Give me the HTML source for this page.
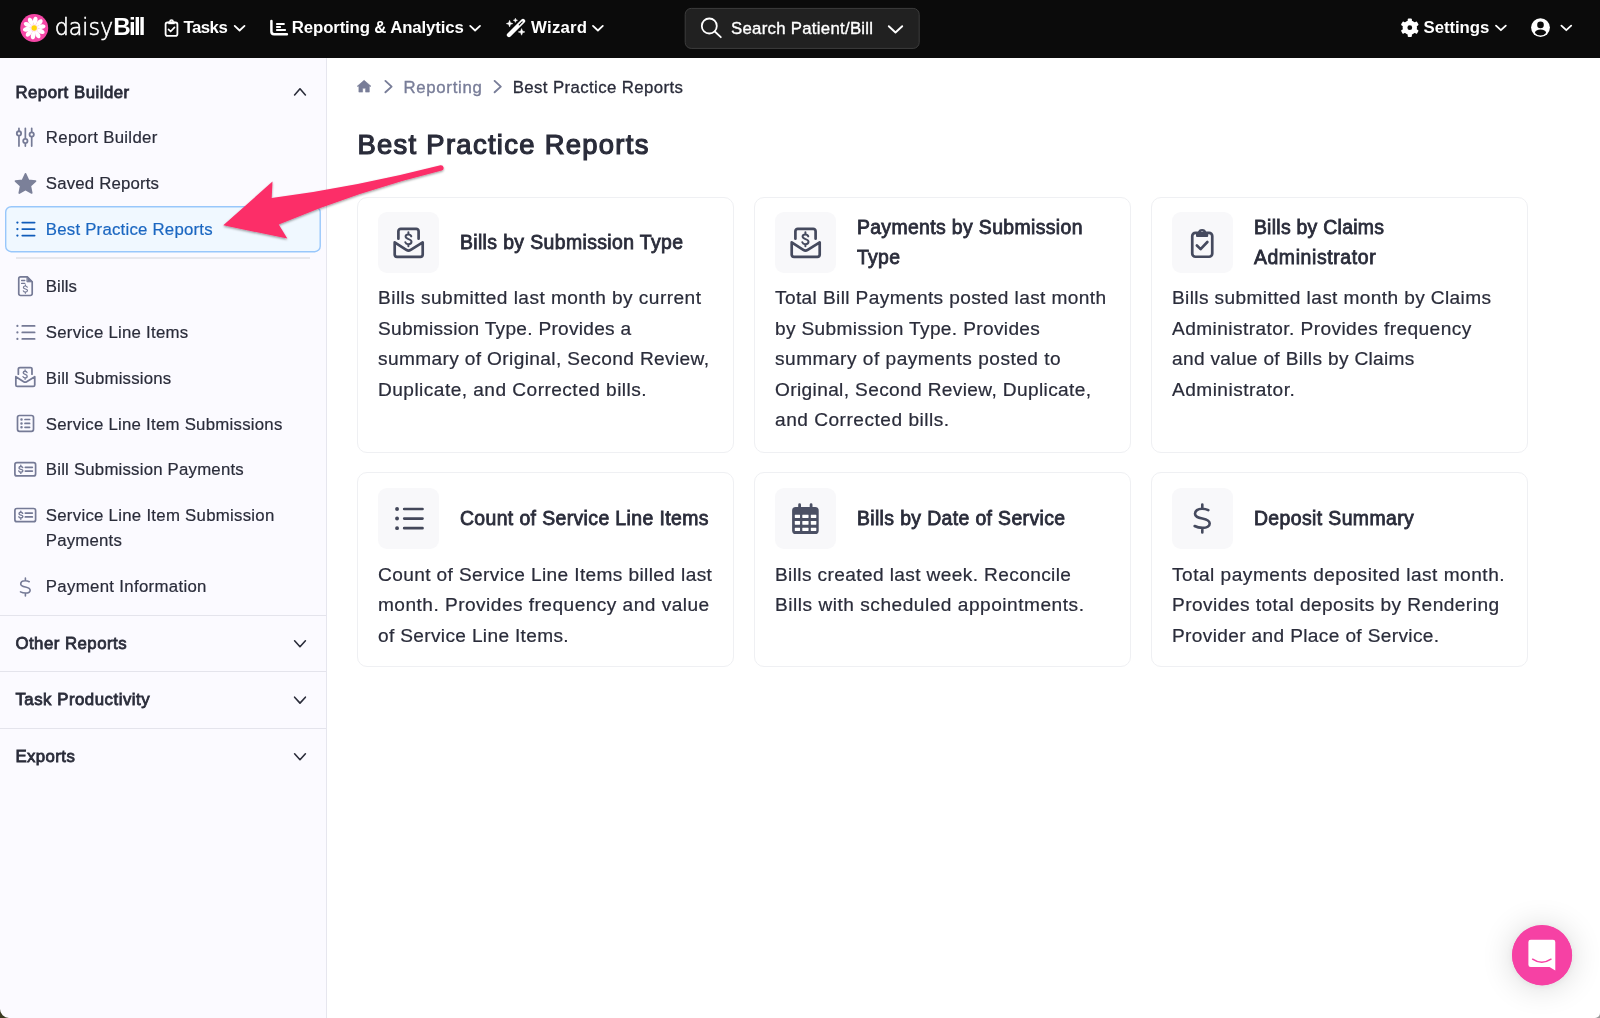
<!DOCTYPE html>
<html lang="en">
<head>
<meta charset="utf-8">
<title>Best Practice Reports - daisyBill</title>
<style>
*{box-sizing:border-box;margin:0;padding:0}
html,body{width:1600px;height:1018px;overflow:hidden;background:#fff;font-family:"Liberation Sans",sans-serif}
.abs{position:absolute}
#txt{position:absolute;left:0;top:0;width:1600px;height:1018px;will-change:transform}
.t{position:absolute;white-space:nowrap;display:block}
#nav{position:absolute;left:0;top:0;width:1600px;height:58px;background:#0b0b0b}
#side{position:absolute;left:0;top:58px;width:327px;height:960px;background:#fbfaff;border-right:1px solid #e6e6ee}
.hr{position:absolute;left:0;width:326px;height:1px;background:#e4e4ec}
.card{position:absolute;width:377px;border:1px solid #eff0f3;border-radius:10px;background:#fff}
.ib{position:absolute;width:61px;height:61px;border-radius:9px;background:#f8f8fa}
svg{position:absolute;overflow:visible}
.si{stroke:#757a96;fill:none;stroke-width:1.7;stroke-linecap:round;stroke-linejoin:round}
.wi{stroke:#fff;fill:none;stroke-width:1.8;stroke-linecap:round;stroke-linejoin:round}
</style>
</head>
<body>
<div id="nav"></div>
<div id="side"></div>
<div class="hr" style="left:16px;width:294px;top:257px;height:2px;background:#e7e7ec"></div>
<div class="hr" style="top:615px"></div>
<div class="hr" style="top:671px"></div>
<div class="hr" style="top:728px"></div>

<div class="card" style="left:357px;top:196.5px;height:256px"></div>
<div class="card" style="left:754px;top:196.5px;height:256px"></div>
<div class="card" style="left:1151px;top:196.5px;height:256px"></div>
<div class="card" style="left:357px;top:472px;height:195px"></div>
<div class="card" style="left:754px;top:472px;height:195px"></div>
<div class="card" style="left:1151px;top:472px;height:195px"></div>
<div class="ib" style="left:378px;top:212px"></div>
<div class="ib" style="left:775px;top:212px"></div>
<div class="ib" style="left:1172px;top:212px"></div>
<div class="ib" style="left:378px;top:488px"></div>
<div class="ib" style="left:775px;top:488px"></div>
<div class="ib" style="left:1172px;top:488px"></div>

<div class="abs" style="left:1512px;top:925.4px;width:60px;height:60px;border-radius:50%;background:#f641a4;box-shadow:0 1px 6px 0 rgba(0,0,0,.06),0 2px 32px 0 rgba(0,0,0,.16)"></div>
<svg class="abs" style="left:0;top:0" width="1600" height="1018" viewBox="0 0 1600 1018">
<defs>
<filter id="ash" x="-10%" y="-20%" width="120%" height="150%"><feDropShadow dx="0" dy="1.200" stdDeviation="0.900" flood-color="#000" flood-opacity="0.400"/></filter>
<filter id="ish" x="-60%" y="-60%" width="220%" height="220%"><feDropShadow dx="0" dy="2" stdDeviation="9" flood-color="#000" flood-opacity="0.16"/></filter>
<path id="pet" d="M0 -2.2 C-2.6 -5 -2.9 -9.3 -1.2 -10.9 C-0.5 -11.6 0.5 -11.6 1.2 -10.9 C2.9 -9.3 2.6 -5 0 -2.2Z"/>

<g id="envd" fill="none" stroke-linecap="round" stroke-linejoin="round">
<path d="M5.400 11.700V4.200a2.400 2.400 0 0 1 2.400-2.400H23.200a2.400 2.400 0 0 1 2.400 2.400V11.700"/>
<path d="M1.700 27.600V15.400L13.300 22.900Q15.500 24.300 17.700 22.900L29.700 15.400V27.600a2.300 2.300 0 0 1-2.300 2.300H4a2.300 2.300 0 0 1-2.300-2.300z"/>
<path d="M18.300 9.400C17.900 8.100 16.900 7.400 15.400 7.400C13.700 7.400 12.600 8.300 12.600 9.600C12.600 12.800 18.500 11.400 18.500 14.800C18.500 16.200 17.300 17.200 15.400 17.200C13.800 17.200 12.700 16.500 12.300 15.300M15.400 5.300V7.400M15.400 17.200V19.300" stroke-width="2"/>
</g>
<g id="clipd" stroke-linecap="round" stroke-linejoin="round">
<rect x="2.250" y="5.850" width="20" height="23.900" rx="3.200" fill="none"/>
<path d="M7 10a1 1 0 0 1-1-1V6.400a1 1 0 0 1 1-1h.8a4.400 4.400 0 0 1 8.600 0h.8a1 1 0 0 1 1 1V9a1 1 0 0 1-1 1z M12.100 4.050a1.350 1.350 0 1 0 0 2.700a1.350 1.350 0 1 0 0-2.700z" fill-rule="evenodd" stroke="none" class="f"/>
<path d="M6.900 18.550L10.600 22.100L17.350 15" fill="none"/>
</g>
<g id="dold" fill="none" stroke-linecap="round" stroke-linejoin="round">
<path d="M6 -8.100C4.200 -9.100 2.200 -9.600 -.3 -9.600C-4.500 -9.600 -7.300 -7.600 -7.300 -4.500C-7.300 -1.500 -4.800 -.7 0 .2C4.700 1.200 7.400 2.200 7.400 5.200C7.400 8 4.700 9.600 .3 9.600C-2.800 9.600 -5.500 8.900 -7.700 7.700M0 -13.700V-9.600M0 9.600V14.100"/>
</g>
</defs>
<rect x="685.2" y="8.400" width="234" height="40" rx="6" fill="#212121" stroke="#3d3d3d" stroke-width="1"/>
<rect x="5.700" y="206.700" width="314.500" height="45" rx="5.500" fill="#f0f8ff" stroke="#98c7fb" stroke-width="1.400"/>
<!-- logo -->
<circle cx="34.2" cy="28.1" r="14" fill="#f547a6"/>
<g transform="translate(34.2 28)" fill="#ffffff">
<use href="#pet" transform="rotate(8)"/><use href="#pet" transform="rotate(44)"/><use href="#pet" transform="rotate(80)"/><use href="#pet" transform="rotate(116)"/><use href="#pet" transform="rotate(152)"/><use href="#pet" transform="rotate(188)"/><use href="#pet" transform="rotate(224)"/><use href="#pet" transform="rotate(260)"/><use href="#pet" transform="rotate(296)"/><use href="#pet" transform="rotate(332)"/>
<circle r="4" fill="#ffe9f4"/><circle r="2.7" fill="#ffd60a"/>
</g>
<!-- nav: tasks clipboard -->
<g stroke="#fff" fill="none" stroke-linecap="round" stroke-linejoin="round">
<rect x="165.600" y="22.500" width="11.800" height="13.300" rx="1.900" stroke-width="1.800"/>
<path d="M168.300 22.900h6.400" stroke-width="2.600" stroke-linecap="butt"/>
<path d="M169.900 21.600a1.600 1.600 0 0 1 3.200 0" stroke-width="1.500"/>
<path d="M168.500 29.400l2.100 2.100 3.900-4.100" stroke-width="1.700"/>
</g>
<!-- nav chevrons -->
<g class="wi" stroke-width="1.8">
<path d="M234.7 25.9l4.9 4.6 4.9-4.6"/>
<path d="M470.2 25.9l4.9 4.6 4.9-4.6"/>
<path d="M593 25.9l4.9 4.6 4.9-4.6"/>
<path d="M1496 25.6l4.9 4.6 4.9-4.6"/>
<path d="M1561.4 25.6l4.9 4.6 4.9-4.6"/>
<path d="M888.8 26.2l6.7 6.3 6.7-6.3" stroke-width="1.9"/>
</g>
<!-- nav: chart -->
<g class="wi">
<path d="M271.400 21v10.600a2.700 2.700 0 0 0 2.700 2.700h12.800" stroke-width="2.500"/>
<path d="M276.900 24h7M276.900 27h3.200M276.900 30h8.200" stroke-width="2"/>
</g>
<!-- nav: wand -->
<g>
<path d="M509 35l14-14" stroke="#fff" stroke-width="4.4" stroke-linecap="round"/>
<path d="M519.2 24.8l3-3" stroke="#0b0b0b" stroke-width="1.1" stroke-linecap="round"/>
<path d="M509.6 20.3l.9 2.4 2.4.9-2.4.9-.9 2.4-.9-2.4-2.4-.9 2.4-.9z M515.4 18.2l.6 1.5 1.5.6-1.500.6-.6 1.5-.6-1.5-1.5-.6 1.5-.6z M521.6 28.600l.9 2.400 2.400.9-2.400.9-.9 2.400-.9-2.400-2.400-.9 2.400-.9z" fill="#fff" stroke="#fff" stroke-width=".5" stroke-linejoin="round"/>
</g>
<!-- search box -->
<g class="wi" stroke-width="1.9"><circle cx="709.3" cy="26" r="7.500"/><path d="M714.800 31.500l6 5.700"/></g>
<!-- gear -->
<g transform="translate(1409.800 27.700)">
<circle r="4.800" fill="none" stroke="#fff" stroke-width="4.800"/>
<g fill="#fff"><rect x="-2.100" y="-9.200" width="4.200" height="4" rx="1"/><rect x="-2.100" y="-9.200" width="4.200" height="4" rx="1" transform="rotate(60)"/><rect x="-2.100" y="-9.200" width="4.200" height="4" rx="1" transform="rotate(120)"/><rect x="-2.100" y="-9.200" width="4.200" height="4" rx="1" transform="rotate(180)"/><rect x="-2.100" y="-9.200" width="4.200" height="4" rx="1" transform="rotate(240)"/><rect x="-2.100" y="-9.200" width="4.200" height="4" rx="1" transform="rotate(300)"/></g>
</g>
<!-- user -->
<g transform="translate(1540.500 27.600)">
<circle r="9.400" fill="#fff"/><circle cy="-2.700" r="3.300" fill="#0b0b0b"/>
<path d="M-5.600 5.300a5.600 3.400 0 0 1 11.200 0a7.500 7.500 0 0 1-11.200 0z" fill="#0b0b0b"/>
</g>
<!-- sidebar chevrons -->
<g fill="none" stroke="#2a2c3a" stroke-width="1.600" stroke-linecap="round" stroke-linejoin="round">
<path d="M294.600 95l5.400-6.200 5.400 6.200"/>
<path d="M294.600 640.800l5.400 5.900 5.400-5.900"/>
<path d="M294.600 697.200l5.400 5.900 5.400-5.900"/>
<path d="M294.600 753.800l5.400 5.900 5.400-5.900"/>
</g>
<!-- sidebar: sliders -->
<g class="si" stroke-width="1.900">
<path d="M18.960 128.300v2.200M18.960 136.400v9.700M25.350 128.300v9.800M25.350 144v2.100M31.700 128.300v3.400M31.700 137.600v8.500"/>
<circle cx="18.960" cy="133.400" r="2.150" stroke-width="1.800"/><circle cx="25.350" cy="141" r="2.150" stroke-width="1.800"/><circle cx="31.700" cy="134.600" r="2.150" stroke-width="1.800"/>
</g>
<!-- star -->
<path d="M25.500 173.800l3 6.500 7 .8-5.200 4.900 1.400 7-6.200-3.500-6.200 3.500 1.400-7-5.200-4.900 7-.8z" fill="#7b8099" stroke="#7b8099" stroke-width="1.700" stroke-linejoin="round"/>
<!-- list active -->
<g fill="none" stroke="#105cba" stroke-width="1.800" stroke-linecap="round">
<path d="M22.300 222.600h12.300M22.300 229.100h12.300M22.300 235.600h12.300"/>
<path d="M17.400 222.600h.01M17.400 229.100h.01M17.400 235.600h.01" stroke-width="2.300"/>
</g>
<!-- file invoice -->
<g class="si" stroke-width="1.800">
<path d="M20.550 276.900H27.300L32.200 281.800V293.700a1.800 1.800 0 0 1-1.800 1.800H20.550a1.800 1.800 0 0 1-1.800-1.800V278.700a1.800 1.800 0 0 1 1.800-1.800z"/>
<path d="M27.300 276.900L32.200 281.800H27.300z" fill="#757a96" stroke-width="1"/>
<path d="M21.600 280.500h3.200M21.600 283.400h3.200" stroke-width="1.300"/>
<path d="M27.300 287.200c-.3-.8-1-1.200-2-1.200-1.100 0-1.900.6-1.900 1.500 0 2.100 4.100.9 4.100 3.100 0 .9-.8 1.500-2.100 1.500-1 0-1.800-.4-2.100-1.200M25.400 284.900v1.100M25.400 292.100v1.100" stroke-width="1.200"/>
</g>
<!-- list gray -->
<g fill="none" stroke="#757a96" stroke-width="1.800" stroke-linecap="round">
<path d="M22.300 325.900h12.300M22.300 332.400h12.300M22.300 338.900h12.300"/>
<path d="M17.400 325.900h.01M17.400 332.400h.01M17.400 338.900h.01" stroke-width="2.200"/>
</g>
<!-- envelope open dollar (sidebar) -->
<use href="#envd" transform="translate(14.700 366.300) scale(0.675)" stroke="#757a96" stroke-width="2.600"/>
<!-- list alt -->
<g class="si">
<rect x="17.500" y="415.500" width="16" height="15.800" rx="2"/>
<path d="M25 419.500h4.600M25 423.400h4.600M25 427.300h4.600" stroke-width="1.700"/>
<path d="M21.500 419.500h.01M21.500 423.400h.01M21.500 427.300h.01" stroke-width="2.500"/>
</g>
<!-- money check 1 & 2 -->
<g class="si" id="mc1">
<rect x="14.900" y="462.700" width="20.700" height="13.200" rx="2"/>
<path d="M25.400 467.300h6.900M25.400 471.100h6.900" stroke-width="1.800"/>
<path d="M22.700 467.600c-.3-.8-1-1.100-1.900-1.100-1.100 0-1.800.6-1.800 1.400 0 2 3.900.9 3.900 2.900 0 .9-.8 1.400-2 1.400-1 0-1.800-.4-2.100-1.200M20.800 465.300v1.200M20.800 472.200v1.200" stroke-width="1.400"/>
</g>
<g class="si" transform="translate(0 45.800)">
<rect x="14.900" y="462.700" width="20.700" height="13.200" rx="2"/>
<path d="M25.400 467.300h6.900M25.400 471.100h6.900" stroke-width="1.800"/>
<path d="M22.700 467.600c-.3-.8-1-1.100-1.900-1.100-1.100 0-1.800.6-1.800 1.400 0 2 3.900.9 3.900 2.900 0 .9-.8 1.400-2 1.400-1 0-1.800-.4-2.100-1.200M20.800 465.300v1.200M20.800 472.200v1.200" stroke-width="1.400"/>
</g>
<!-- dollar sidebar -->
<use href="#dold" transform="translate(25.400 586.900) scale(0.640)" stroke="#757a96" stroke-width="2.500"/>
<!-- breadcrumb -->
<path d="M364.100 80.300l-6.900 6h1.700v5.800h3.700v-3.900h3v3.900h3.700v-5.800h1.700z" fill="#787d98" stroke="#787d98" stroke-width=".6" stroke-linejoin="round"/>
<g fill="none" stroke="#787d98" stroke-width="1.900" stroke-linecap="round" stroke-linejoin="round">
<path d="M385.400 80.900l6.200 5.700-6.200 5.700"/><path d="M494.600 80.900l6.200 5.700-6.200 5.700"/>
</g>
<!-- card icons -->
<use href="#envd" transform="translate(393 227)" stroke="#454a5e" stroke-width="2.700"/>
<use href="#envd" transform="translate(790 227)" stroke="#454a5e" stroke-width="2.700"/>
<use href="#clipd" transform="translate(1190 227)" stroke="#454a5e" fill="#454a5e" stroke-width="2.700"/>
<!-- card list -->
<g fill="none" stroke="#434759" stroke-width="2.700" stroke-linecap="round">
<path d="M404.200 509h18.300M404.200 518.550h18.300M404.200 528.150h18.300"/>
<path d="M397.050 509h.01M397.050 518.550h.01M397.050 528.150h.01" stroke-width="3.900"/>
</g>
<!-- card calendar -->
<g>
<path d="M799.600 504.700v4M811.100 504.700v4" stroke="#4b5064" stroke-width="2.800" stroke-linecap="round"/>
<rect x="792.100" y="507.050" width="26.600" height="26.950" rx="3.600" fill="#4b5064"/>
<g fill="#ffffff"><rect x="794.800" y="514.700" width="5.250" height="3.300" rx=".4"/><rect x="802.300" y="514.700" width="6.250" height="3.300" rx=".4"/><rect x="810.800" y="514.700" width="5.500" height="3.300" rx=".4"/><rect x="794.800" y="521.100" width="5.250" height="3.600" rx=".4"/><rect x="802.300" y="521.100" width="6.250" height="3.600" rx=".4"/><rect x="810.800" y="521.100" width="5.500" height="3.600" rx=".4"/><rect x="794.800" y="527.700" width="5.250" height="3.300" rx=".4"/><rect x="802.300" y="527.700" width="6.250" height="3.300" rx=".4"/><rect x="810.800" y="527.700" width="5.500" height="3.300" rx=".4"/></g>
</g>
<!-- card dollar -->
<use href="#dold" transform="translate(1202.300 518.300)" stroke="#454a5e" stroke-width="2.600"/>
<!-- arrow -->
<path d="M223.300 225.300L272.500 181.600L271.700 198Q356 187 440.500 165.200A2.800 2.800 0 0 1 441.800 170.600Q360 190.500 278.750 224.500L287.300 238.600Z" fill="#fc2d68" filter="url(#ash)"/>
<!-- intercom -->
<circle cx="1542.100" cy="955.400" r="30" fill="#f641a4"/>
<path d="M1530.700 939.800h22.300a2.300 2.300 0 0 1 2.300 2.300v28.300l-5.800-3.300h-18.800a2.300 2.300 0 0 1-2.300-2.300v-22.700a2.300 2.300 0 0 1 2.300-2.300z" fill="#fff"/>
<path d="M1532.600 959.200q9.100 6.200 18.400 0" fill="none" stroke="#f641a4" stroke-width="1.500" stroke-linecap="round"/>
<!-- window corners -->
<path d="M0 1018v-9a9 9 0 0 0 9 9z" fill="#3a3a20"/>
<path d="M1600 1018v-5a5 5 0 0 1-5 5z" fill="#999"/>
</svg>

<div id="txt">
<span id="t0" class="t" style="left:54.70px;top:12.77px;font-size:22.3px;line-height:29px;font-weight:200;color:#ffffff;letter-spacing:-0.100px;font-family:'DejaVu Sans Light','DejaVu Sans',sans-serif;-webkit-text-stroke:0.55px #fff;">daisy</span>
<span id="t1" class="t" style="left:113.20px;top:11.11px;font-size:24.2px;line-height:31px;font-weight:700;color:#ffffff;letter-spacing:-1.750px;">Bill</span>
<span id="t2" class="t" style="left:183.57px;top:16.58px;font-size:16.8px;line-height:22px;font-weight:700;color:#ffffff;letter-spacing:-0.540px;">Tasks</span>
<span id="t3" class="t" style="left:291.87px;top:16.58px;font-size:16.8px;line-height:22px;font-weight:700;color:#ffffff;letter-spacing:-0.139px;">Reporting &amp; Analytics</span>
<span id="t4" class="t" style="left:531.08px;top:16.58px;font-size:16.8px;line-height:22px;font-weight:700;color:#ffffff;letter-spacing:0.231px;">Wizard</span>
<span id="t5" class="t" style="left:730.94px;top:18.28px;font-size:16.8px;line-height:22px;font-weight:400;color:#ffffff;letter-spacing:0.280px;-webkit-text-stroke:0.35px #fff;">Search Patient/Bill</span>
<span id="t6" class="t" style="left:1423.62px;top:17.38px;font-size:16.8px;line-height:22px;font-weight:700;color:#ffffff;letter-spacing:-0.080px;">Settings</span>
<span id="t7" class="t" style="left:15.40px;top:82.18px;font-size:16.8px;line-height:22px;font-weight:400;color:#2a2c3a;letter-spacing:0.504px;-webkit-text-stroke:0.8px #2a2c3a;">Report Builder</span>
<span id="t8" class="t" style="left:45.80px;top:127.18px;font-size:16.8px;line-height:22px;font-weight:400;color:#2a2c3a;letter-spacing:0.329px;-webkit-text-stroke:0.2px #2a2c3a;">Report Builder</span>
<span id="t9" class="t" style="left:45.80px;top:173.18px;font-size:16.8px;line-height:22px;font-weight:400;color:#2a2c3a;letter-spacing:0.182px;-webkit-text-stroke:0.2px #2a2c3a;">Saved Reports</span>
<span id="t10" class="t" style="left:45.80px;top:276.18px;font-size:16.8px;line-height:22px;font-weight:400;color:#2a2c3a;letter-spacing:0.107px;-webkit-text-stroke:0.2px #2a2c3a;">Bills</span>
<span id="t11" class="t" style="left:45.80px;top:322.18px;font-size:16.8px;line-height:22px;font-weight:400;color:#2a2c3a;letter-spacing:0.251px;-webkit-text-stroke:0.2px #2a2c3a;">Service Line Items</span>
<span id="t12" class="t" style="left:45.80px;top:368.18px;font-size:16.8px;line-height:22px;font-weight:400;color:#2a2c3a;letter-spacing:0.218px;-webkit-text-stroke:0.2px #2a2c3a;">Bill Submissions</span>
<span id="t13" class="t" style="left:45.80px;top:414.18px;font-size:16.8px;line-height:22px;font-weight:400;color:#2a2c3a;letter-spacing:0.254px;-webkit-text-stroke:0.2px #2a2c3a;">Service Line Item Submissions</span>
<span id="t14" class="t" style="left:45.80px;top:459.18px;font-size:16.8px;line-height:22px;font-weight:400;color:#2a2c3a;letter-spacing:0.211px;-webkit-text-stroke:0.2px #2a2c3a;">Bill Submission Payments</span>
<span id="t15" class="t" style="left:45.80px;top:505.18px;font-size:16.8px;line-height:22px;font-weight:400;color:#2a2c3a;letter-spacing:0.276px;-webkit-text-stroke:0.2px #2a2c3a;">Service Line Item Submission</span>
<span id="t16" class="t" style="left:45.80px;top:530.18px;font-size:16.8px;line-height:22px;font-weight:400;color:#2a2c3a;letter-spacing:0.206px;-webkit-text-stroke:0.2px #2a2c3a;">Payments</span>
<span id="t17" class="t" style="left:45.80px;top:576.18px;font-size:16.8px;line-height:22px;font-weight:400;color:#2a2c3a;letter-spacing:0.323px;-webkit-text-stroke:0.2px #2a2c3a;">Payment Information</span>
<span id="t18" class="t" style="left:45.80px;top:219.18px;font-size:16.8px;line-height:22px;font-weight:400;color:#1b67c1;letter-spacing:0.226px;-webkit-text-stroke:0.2px #1b67c1;">Best Practice Reports</span>
<span id="t19" class="t" style="left:15.40px;top:632.93px;font-size:16.8px;line-height:22px;font-weight:400;color:#2a2c3a;letter-spacing:0.480px;-webkit-text-stroke:0.8px #2a2c3a;">Other Reports</span>
<span id="t20" class="t" style="left:15.40px;top:689.18px;font-size:16.8px;line-height:22px;font-weight:400;color:#2a2c3a;letter-spacing:0.523px;-webkit-text-stroke:0.8px #2a2c3a;">Task Productivity</span>
<span id="t21" class="t" style="left:15.40px;top:745.93px;font-size:16.8px;line-height:22px;font-weight:400;color:#2a2c3a;letter-spacing:0.426px;-webkit-text-stroke:0.8px #2a2c3a;">Exports</span>
<span id="t22" class="t" style="left:403.50px;top:77.08px;font-size:16.8px;line-height:22px;font-weight:400;color:#787d98;letter-spacing:0.684px;-webkit-text-stroke:0.35px #787d98;">Reporting</span>
<span id="t23" class="t" style="left:512.70px;top:77.08px;font-size:16.8px;line-height:22px;font-weight:400;color:#2a2c3a;letter-spacing:0.399px;-webkit-text-stroke:0.3px #2a2c3a;">Best Practice Reports</span>
<span id="t24" class="t" style="left:357.40px;top:126.51px;font-size:27.4px;line-height:36px;font-weight:400;color:#2a2c3a;letter-spacing:1.306px;-webkit-text-stroke:1.2px #2a2c3a;">Best Practice Reports</span>
<span id="t25" class="t" style="left:459.90px;top:229.78px;font-size:19.4px;line-height:25px;font-weight:400;color:#2a2c3a;letter-spacing:0.392px;-webkit-text-stroke:0.8px #2a2c3a;">Bills by Submission Type</span>
<span id="t26" class="t" style="left:378.00px;top:284.78px;font-size:19.1px;line-height:25px;font-weight:400;color:#2a2c3a;letter-spacing:0.453px;-webkit-text-stroke:0.22px #2a2c3a;">Bills submitted last month by current</span>
<span id="t27" class="t" style="left:378.00px;top:315.78px;font-size:19.1px;line-height:25px;font-weight:400;color:#2a2c3a;letter-spacing:0.279px;-webkit-text-stroke:0.22px #2a2c3a;">Submission Type. Provides a</span>
<span id="t28" class="t" style="left:378.00px;top:345.78px;font-size:19.1px;line-height:25px;font-weight:400;color:#2a2c3a;letter-spacing:0.371px;-webkit-text-stroke:0.22px #2a2c3a;">summary of Original, Second Review,</span>
<span id="t29" class="t" style="left:378.00px;top:376.78px;font-size:19.1px;line-height:25px;font-weight:400;color:#2a2c3a;letter-spacing:0.462px;-webkit-text-stroke:0.22px #2a2c3a;">Duplicate, and Corrected bills.</span>
<span id="t30" class="t" style="left:856.90px;top:214.53px;font-size:19.4px;line-height:25px;font-weight:400;color:#2a2c3a;letter-spacing:0.373px;-webkit-text-stroke:0.8px #2a2c3a;">Payments by Submission</span>
<span id="t31" class="t" style="left:856.90px;top:244.53px;font-size:19.4px;line-height:25px;font-weight:400;color:#2a2c3a;letter-spacing:0.335px;-webkit-text-stroke:0.8px #2a2c3a;">Type</span>
<span id="t32" class="t" style="left:775.00px;top:284.78px;font-size:19.1px;line-height:25px;font-weight:400;color:#2a2c3a;letter-spacing:0.381px;-webkit-text-stroke:0.22px #2a2c3a;">Total Bill Payments posted last month</span>
<span id="t33" class="t" style="left:775.00px;top:315.78px;font-size:19.1px;line-height:25px;font-weight:400;color:#2a2c3a;letter-spacing:0.350px;-webkit-text-stroke:0.22px #2a2c3a;">by Submission Type. Provides</span>
<span id="t34" class="t" style="left:775.00px;top:345.78px;font-size:19.1px;line-height:25px;font-weight:400;color:#2a2c3a;letter-spacing:0.501px;-webkit-text-stroke:0.22px #2a2c3a;">summary of payments posted to</span>
<span id="t35" class="t" style="left:775.00px;top:376.78px;font-size:19.1px;line-height:25px;font-weight:400;color:#2a2c3a;letter-spacing:0.367px;-webkit-text-stroke:0.22px #2a2c3a;">Original, Second Review, Duplicate,</span>
<span id="t36" class="t" style="left:775.00px;top:406.78px;font-size:19.1px;line-height:25px;font-weight:400;color:#2a2c3a;letter-spacing:0.506px;-webkit-text-stroke:0.22px #2a2c3a;">and Corrected bills.</span>
<span id="t37" class="t" style="left:1253.90px;top:214.53px;font-size:19.4px;line-height:25px;font-weight:400;color:#2a2c3a;letter-spacing:0.286px;-webkit-text-stroke:0.8px #2a2c3a;">Bills by Claims</span>
<span id="t38" class="t" style="left:1253.90px;top:244.53px;font-size:19.4px;line-height:25px;font-weight:400;color:#2a2c3a;letter-spacing:0.628px;-webkit-text-stroke:0.8px #2a2c3a;">Administrator</span>
<span id="t39" class="t" style="left:1172.00px;top:284.78px;font-size:19.1px;line-height:25px;font-weight:400;color:#2a2c3a;letter-spacing:0.384px;-webkit-text-stroke:0.22px #2a2c3a;">Bills submitted last month by Claims</span>
<span id="t40" class="t" style="left:1172.00px;top:315.78px;font-size:19.1px;line-height:25px;font-weight:400;color:#2a2c3a;letter-spacing:0.429px;-webkit-text-stroke:0.22px #2a2c3a;">Administrator. Provides frequency</span>
<span id="t41" class="t" style="left:1172.00px;top:345.78px;font-size:19.1px;line-height:25px;font-weight:400;color:#2a2c3a;letter-spacing:0.331px;-webkit-text-stroke:0.22px #2a2c3a;">and value of Bills by Claims</span>
<span id="t42" class="t" style="left:1172.00px;top:376.78px;font-size:19.1px;line-height:25px;font-weight:400;color:#2a2c3a;letter-spacing:0.464px;-webkit-text-stroke:0.22px #2a2c3a;">Administrator.</span>
<span id="t43" class="t" style="left:459.90px;top:505.78px;font-size:19.4px;line-height:25px;font-weight:400;color:#2a2c3a;letter-spacing:0.396px;-webkit-text-stroke:0.8px #2a2c3a;">Count of Service Line Items</span>
<span id="t44" class="t" style="left:378.00px;top:561.78px;font-size:19.1px;line-height:25px;font-weight:400;color:#2a2c3a;letter-spacing:0.380px;-webkit-text-stroke:0.22px #2a2c3a;">Count of Service Line Items billed last</span>
<span id="t45" class="t" style="left:378.00px;top:591.78px;font-size:19.1px;line-height:25px;font-weight:400;color:#2a2c3a;letter-spacing:0.469px;-webkit-text-stroke:0.22px #2a2c3a;">month. Provides frequency and value</span>
<span id="t46" class="t" style="left:378.00px;top:622.78px;font-size:19.1px;line-height:25px;font-weight:400;color:#2a2c3a;letter-spacing:0.336px;-webkit-text-stroke:0.22px #2a2c3a;">of Service Line Items.</span>
<span id="t47" class="t" style="left:856.90px;top:505.78px;font-size:19.4px;line-height:25px;font-weight:400;color:#2a2c3a;letter-spacing:0.383px;-webkit-text-stroke:0.8px #2a2c3a;">Bills by Date of Service</span>
<span id="t48" class="t" style="left:775.00px;top:561.78px;font-size:19.1px;line-height:25px;font-weight:400;color:#2a2c3a;letter-spacing:0.383px;-webkit-text-stroke:0.22px #2a2c3a;">Bills created last week. Reconcile</span>
<span id="t49" class="t" style="left:775.00px;top:591.78px;font-size:19.1px;line-height:25px;font-weight:400;color:#2a2c3a;letter-spacing:0.517px;-webkit-text-stroke:0.22px #2a2c3a;">Bills with scheduled appointments.</span>
<span id="t50" class="t" style="left:1253.90px;top:505.78px;font-size:19.4px;line-height:25px;font-weight:400;color:#2a2c3a;letter-spacing:0.410px;-webkit-text-stroke:0.8px #2a2c3a;">Deposit Summary</span>
<span id="t51" class="t" style="left:1172.00px;top:561.78px;font-size:19.1px;line-height:25px;font-weight:400;color:#2a2c3a;letter-spacing:0.495px;-webkit-text-stroke:0.22px #2a2c3a;">Total payments deposited last month.</span>
<span id="t52" class="t" style="left:1172.00px;top:591.78px;font-size:19.1px;line-height:25px;font-weight:400;color:#2a2c3a;letter-spacing:0.460px;-webkit-text-stroke:0.22px #2a2c3a;">Provides total deposits by Rendering</span>
<span id="t53" class="t" style="left:1172.00px;top:622.78px;font-size:19.1px;line-height:25px;font-weight:400;color:#2a2c3a;letter-spacing:0.355px;-webkit-text-stroke:0.22px #2a2c3a;">Provider and Place of Service.</span>
</div>
</body>
</html>
